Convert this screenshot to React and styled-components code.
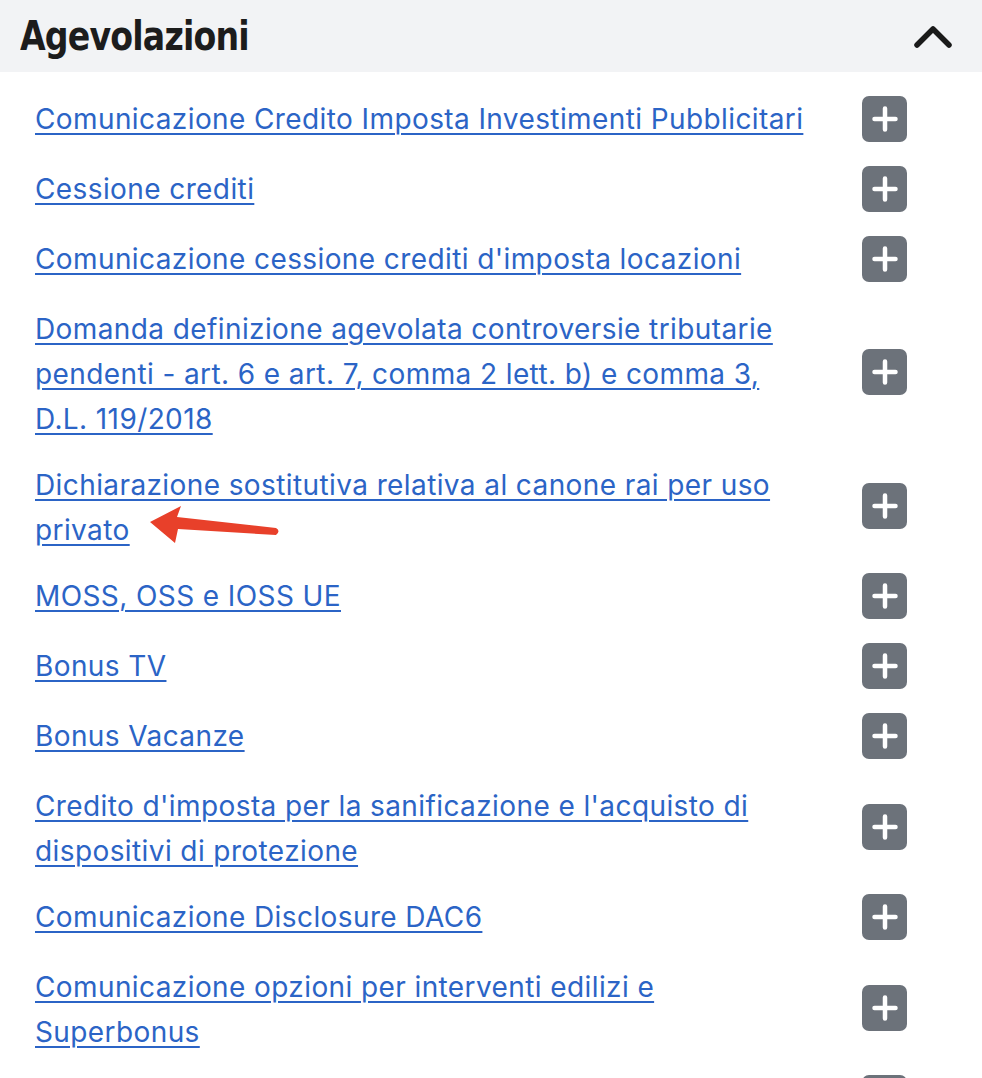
import styled, { createGlobalStyle } from "styled-components";

const GlobalStyle = createGlobalStyle`
    body {
        margin: 0;
        background: #ffffff;
        font-family: Inter, "Liberation Sans", sans-serif;
    }
`

const items = [
    "Comunicazione Credito Imposta Investimenti Pubblicitari",
    "Cessione crediti",
    "Comunicazione cessione crediti d'imposta locazioni",
    "Domanda definizione agevolata controversie tributarie pendenti - art. 6 e art. 7, comma 2 lett. b) e comma 3, D.L. 119/2018",
    "Dichiarazione sostitutiva relativa al canone rai per uso privato",
    "MOSS, OSS e IOSS UE",
    "Bonus TV",
    "Bonus Vacanze",
    "Credito d'imposta per la sanificazione e l'acquisto di dispositivi di protezione",
    "Comunicazione Disclosure DAC6",
    "Comunicazione opzioni per interventi edilizi e Superbonus",
    "Contributo a fondo perduto",
];

export default function App() {
    return (
        <>
            <GlobalStyle />
            <Panel>
                <Header>
                    <Title>Agevolazioni</Title>
                    <Toggle aria-label="Chiudi">
                        <svg width="38" height="24" viewBox="0 0 38 24">
                            <polyline points="3,20 19,4 35,20" fill="none" stroke="#1a1a1a" strokeWidth="5.5" strokeLinecap="round" strokeLinejoin="round" />
                        </svg>
                    </Toggle>
                </Header>
                <List>
                    {items.map((label, i) => (
                        <Row key={i}>
                            <LinkText href="#">{label}</LinkText>
                            <PlusButton aria-label="Espandi">
                                <svg width="26" height="26" viewBox="0 0 26 26">
                                    <path d="M13 2.5v21M2.5 13h21" stroke="#fff" strokeWidth="4.5" strokeLinecap="round" />
                                </svg>
                            </PlusButton>
                            {i === 4 && (
                                <Arrow width="140" height="44" viewBox="0 0 140 44">
                                    <path d="M2 17 L33 1 L29 12 L128 23 Q133 26 128 30 L30 24 L27 38 Z" fill="#e8402a" />
                                </Arrow>
                            )}
                        </Row>
                    ))}
                </List>
            </Panel>
        </>
    );
}

const Panel = styled.div`
    width: 982px;
    overflow: hidden;
`

const Header = styled.div`
    display: flex;
    align-items: center;
    justify-content: space-between;
    height: 72px;
    box-sizing: border-box;
    padding: 0 30px 0 20px;
    background-color: #f2f3f5;
`

const Title = styled.h2`
    margin: 0;
    font-family: "DejaVu Sans", "Liberation Sans", sans-serif;
    font-weight: 700;
    font-size: 40px;
    letter-spacing: -1px;
    color: #1c1c1c;
    transform: scaleX(0.83);
    transform-origin: left center;
`

const Toggle = styled.button`
    display: flex;
    align-items: center;
    justify-content: center;
    padding: 0;
    border: none;
    background: none;
    margin-top: 2px;
`

const List = styled.div`
    display: flex;
    flex-direction: column;
    padding-top: 12px;
`

const Row = styled.div`
    position: relative;
    display: flex;
    align-items: flex-start;
    gap: 40px;
    padding: 0 75px 0 35px;
`

const LinkText = styled.a`
    flex: 1;
    max-width: 785px;
    padding: 13px 0 8px;
    font-size: 28px;
    letter-spacing: 0.4px;
    line-height: 45px;
    color: #2b64c6;
    text-decoration: underline;
    text-decoration-thickness: 2px;
    text-underline-offset: 4px;
`

const PlusButton = styled.button`
    display: flex;
    align-items: center;
    justify-content: center;
    align-self: center;
    flex-shrink: 0;
    width: 45px;
    height: 46px;
    margin: 12px 0 12px auto;
    padding: 0;
    border: none;
    border-radius: 7px;
    background-color: #6c727a;
`

const Arrow = styled.svg`
    position: absolute;
    left: 148px;
    top: 55px;
`
